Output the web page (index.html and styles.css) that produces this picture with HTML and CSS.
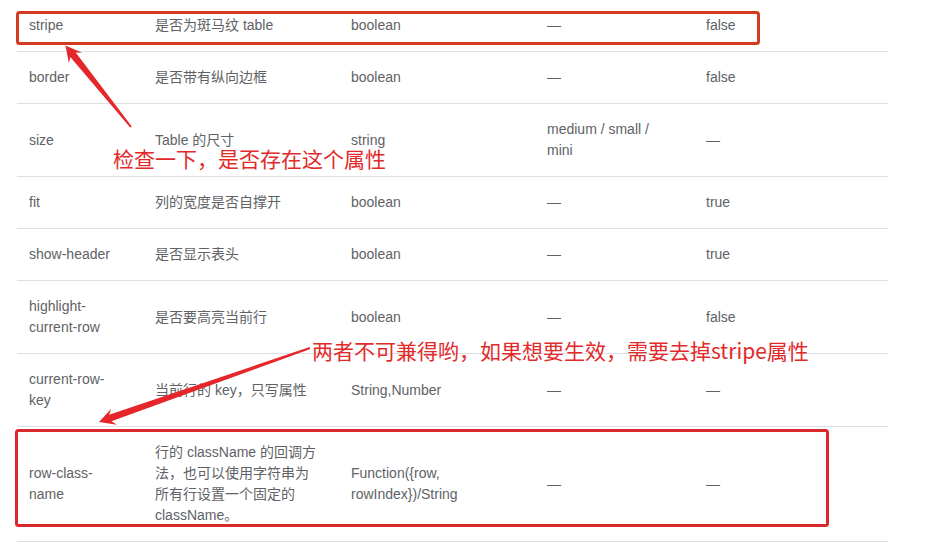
FILE: index.html
```
<!DOCTYPE html>
<html lang="zh-CN">
<head>
    <meta charset="UTF-8">
    <meta name="viewport" content="width=device-width, initial-scale=1.0">
    <title>Table Attributes</title>
    <link rel="stylesheet" href="styles.css">
</head>
<body>
    <div class="page">
        <table class="attr-table">
            <colgroup>
                <col class="col-name">
                <col class="col-desc">
                <col class="col-type">
                <col class="col-values">
                <col class="col-default">
            </colgroup>
            <tbody>
                <tr><td>stripe</td><td>是否为斑马纹 table</td><td>boolean</td><td>—</td><td>false</td></tr>
                <tr><td>border</td><td>是否带有纵向边框</td><td>boolean</td><td>—</td><td>false</td></tr>
                <tr><td>size</td><td>Table 的尺寸</td><td>string</td><td>medium / small / mini</td><td>—</td></tr>
                <tr><td>fit</td><td>列的宽度是否自撑开</td><td>boolean</td><td>—</td><td>true</td></tr>
                <tr><td>show-header</td><td>是否显示表头</td><td>boolean</td><td>—</td><td>true</td></tr>
                <tr><td>highlight-current-row</td><td>是否要高亮当前行</td><td>boolean</td><td>—</td><td>false</td></tr>
                <tr><td>current-row-key</td><td>当前行的 key，只写属性</td><td>String,Number</td><td>—</td><td>—</td></tr>
                <tr><td>row-class-name</td><td>行的 className 的回调方法，也可以使用字符串为所有行设置一个固定的 className。</td><td>Function({row, rowIndex})/String</td><td>—</td><td>—</td></tr>
            </tbody>
        </table>

        <!-- screenshot annotations -->
        <svg class="marks" width="951" height="543" viewBox="0 0 951 543">
            <rect class="box box-orange" x="17.5" y="12.5" width="741" height="31" rx="2"/>
            <rect class="box" x="16.5" y="430.5" width="811" height="95" rx="2"/>
            <polygon class="arrow" points="130.2,127.6 70.3,57 68.9,63.3 65.5,45.5 82.1,52.7 75.7,52.6 131.8,126.4"/>
            <polygon class="arrow" points="309.7,347.1 109.1,414.7 111.3,408.7 99,422 116.9,424.7 111.5,421.3 310.3,348.9"/>
        </svg>
        <span class="note note-check">检查一下，是否存在这个属性</span>
        <span class="note note-stripe">两者不可兼得哟，如果想要生效，需要去掉stripe属性</span>
    </div>
</body>
</html>
```

FILE: styles.css
```
body {
    margin: 0;
    background: #fff;
    font-family: "Liberation Sans", Arial, "Noto Sans CJK SC", sans-serif;
    font-size: 14px;
    color: #606266;
}

.page {
    position: relative;
    width: 951px;
    height: 543px;
    overflow: hidden;
}

.attr-table {
    margin-left: 17px;
    width: 871px;
    table-layout: fixed;
    border-collapse: collapse;
}
.col-name { width: 126px; }
.col-desc { width: 196px; }
.col-type { width: 196px; }
.col-values { width: 159px; }
.col-default { width: 194px; }

.attr-table td {
    padding: 15px 20px 15px 12px;
    line-height: 21px;
    vertical-align: middle;
    border-bottom: 1px solid #dedfe3;
}

.marks {
    position: absolute;
    top: 0;
    left: 0;
}
.box {
    fill: none;
    stroke: #d9292c;
    stroke-width: 3;
}
.box-orange {
    stroke: #d43a20;
}
.arrow {
    fill: #e5262a;
}

.note {
    position: absolute;
    font-family: "Noto Sans CJK SC", sans-serif;
    font-size: 21px;
    line-height: 21px;
    color: #e32a2a;
    white-space: nowrap;
}
.note-check {
    left: 113px;
    top: 148px;
}
.note-stripe {
    left: 312px;
    top: 340px;
}
```
